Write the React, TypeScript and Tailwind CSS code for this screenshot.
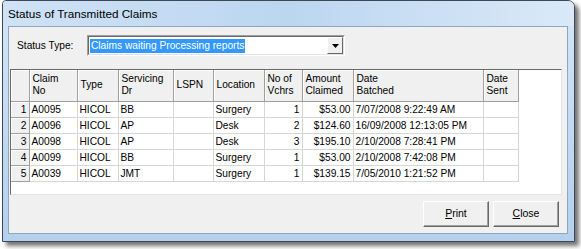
import React from "react";

type Row = {
  no: number;
  claim: string;
  type: string;
  dr: string;
  lspn: string;
  location: string;
  vchrs: number;
  amount: string;
  batched: string;
  sent: string;
};

const rows: Row[] = [
  { no: 1, claim: "A0095", type: "HICOL", dr: "BB", lspn: "", location: "Surgery", vchrs: 1, amount: "$53.00", batched: "7/07/2008 9:22:49 AM", sent: "" },
  { no: 2, claim: "A0096", type: "HICOL", dr: "AP", lspn: "", location: "Desk", vchrs: 2, amount: "$124.60", batched: "16/09/2008 12:13:05 PM", sent: "" },
  { no: 3, claim: "A0098", type: "HICOL", dr: "AP", lspn: "", location: "Desk", vchrs: 3, amount: "$195.10", batched: "2/10/2008 7:28:41 PM", sent: "" },
  { no: 4, claim: "A0099", type: "HICOL", dr: "BB", lspn: "", location: "Surgery", vchrs: 1, amount: "$53.00", batched: "2/10/2008 7:42:08 PM", sent: "" },
  { no: 5, claim: "A0039", type: "HICOL", dr: "JMT", lspn: "", location: "Surgery", vchrs: 1, amount: "$139.15", batched: "7/05/2010 1:21:52 PM", sent: "" },
];

const headers: { label: string[]; w: string }[] = [
  { label: [""], w: "w-[18px]" },
  { label: ["Claim", "No"], w: "w-[48px]" },
  { label: ["Type"], w: "w-[41px]" },
  { label: ["Servicing", "Dr"], w: "w-[55px]" },
  { label: ["LSPN"], w: "w-[40px]" },
  { label: ["Location"], w: "w-[51px]" },
  { label: ["No of", "Vchrs"], w: "w-[38px]" },
  { label: ["Amount", "Claimed"], w: "w-[51px]" },
  { label: ["Date", "Batched"], w: "w-[130px]" },
  { label: ["Date", "Sent"], w: "w-[35px]" },
];

const cell = "h-[16px] px-[2px] border-r border-b border-[#d6d6d6] whitespace-nowrap leading-[15px]";

const Button = ({ first, rest }: { first: string; rest: string }) => (
  <button className="w-[66px] h-[26px] bg-[#f0f0f0] border border-t-white border-l-white border-r-[#696969] border-b-[#696969] shadow-[inset_-1px_-1px_0_#a0a0a0] text-[10.5px] text-black">
    <span className="underline">{first}</span>
    {rest}
  </button>
);

export default function App() {
  return (
    <div className="w-[581px] h-[249px] bg-white pl-[2px] overflow-hidden font-['Liberation_Sans',Arial,sans-serif] text-black">
      <div className="w-[573px] h-[242px] flex flex-col border border-[#3c4856] rounded-tr-[7px] rounded-tl-[4px] bg-gradient-to-b from-[#d6e7f8] via-[#c2daf2] to-[#b4d0ec] shadow-[4px_4px_4px_rgba(0,0,0,0.55)]">
        <div className="h-[25px] pl-[5px] flex items-center text-[11.7px] bg-gradient-to-r from-[#cfe2f6] via-[#bcd6f0] to-[#d9e9f8] rounded-tr-[6px] rounded-tl-[3px]">
          Status of Transmitted Claims
        </div>
        <div className="flex-1 pl-[5px] pr-[6px] pb-[7px] flex">
          <div className="flex-1 border border-[#8ea6bf] bg-[#f0f0f0] flex flex-col text-[10.2px]">
            <div className="flex items-center mt-[8px] h-[21px]">
              <span className="ml-[8px] w-[70px]">Status Type:</span>
              <div className="w-[258px] h-[21px] bg-white border border-t-[#a0a0a0] border-l-[#a0a0a0] border-r-white border-b-white flex items-center">
                <div className="flex-1 h-full border border-t-[#696969] border-l-[#696969] border-r-[#e3e3e3] border-b-[#e3e3e3] flex items-center pl-[1px]">
                  <span className="bg-[#3399ff] text-white px-[1px] leading-[14px]">Claims waiting Processing reports</span>
                  <div className="ml-auto w-[16px] h-[17px] bg-[#f0f0f0] border border-t-white border-l-white border-r-[#696969] border-b-[#696969] flex items-center justify-center">
                    <svg width="7" height="4" viewBox="0 0 7 4">
                      <path d="M0 0h7L3.5 4z" fill="#000" />
                    </svg>
                  </div>
                </div>
              </div>
            </div>
            <div className="ml-[1px] mt-[13px] w-[552px] h-[126px] bg-white border border-t-[#696969] border-l-[#696969] border-r-[#e3e3e3] border-b-[#e3e3e3] overflow-hidden">
              <table className="border-collapse table-fixed w-[507px] border-r border-b border-[#7a7a7a]">
                <thead>
                  <tr>
                    {headers.map((h, i) => (
                      <th
                        key={i}
                        className={`${h.w} h-[31px] p-0 bg-[#f0f0f0] border-r border-b border-[#a0a0a0] font-normal text-left align-middle`}
                      >
                        <div className="h-[30px] flex flex-col justify-center pl-[3px] leading-[12px] shadow-[inset_1px_1px_0_#fff]">
                          {h.label.map((l, j) => (
                            <span key={j}>{l}</span>
                          ))}
                        </div>
                      </th>
                    ))}
                  </tr>
                </thead>
                <tbody>
                  {rows.map((r) => (
                    <tr key={r.no}>
                      <td className="h-[16px] p-0 pr-[2px] bg-[#f0f0f0] border-r border-b border-[#a0a0a0] text-right leading-[15px] shadow-[inset_1px_1px_0_#fff]">
                        {r.no}
                      </td>
                      <td className={cell}>{r.claim}</td>
                      <td className={cell}>{r.type}</td>
                      <td className={cell}>{r.dr}</td>
                      <td className={cell}>{r.lspn}</td>
                      <td className={cell}>{r.location}</td>
                      <td className={`${cell} text-right`}>{r.vchrs}</td>
                      <td className={`${cell} text-right`}>{r.amount}</td>
                      <td className={cell}>{r.batched}</td>
                      <td className={cell}>{r.sent}</td>
                    </tr>
                  ))}
                </tbody>
              </table>
            </div>
            <div className="mt-[6px] flex justify-end gap-[4px] pr-[8px]">
              <Button first="P" rest="rint" />
              <Button first="C" rest="lose" />
            </div>
          </div>
        </div>
      </div>
    </div>
  );
}
